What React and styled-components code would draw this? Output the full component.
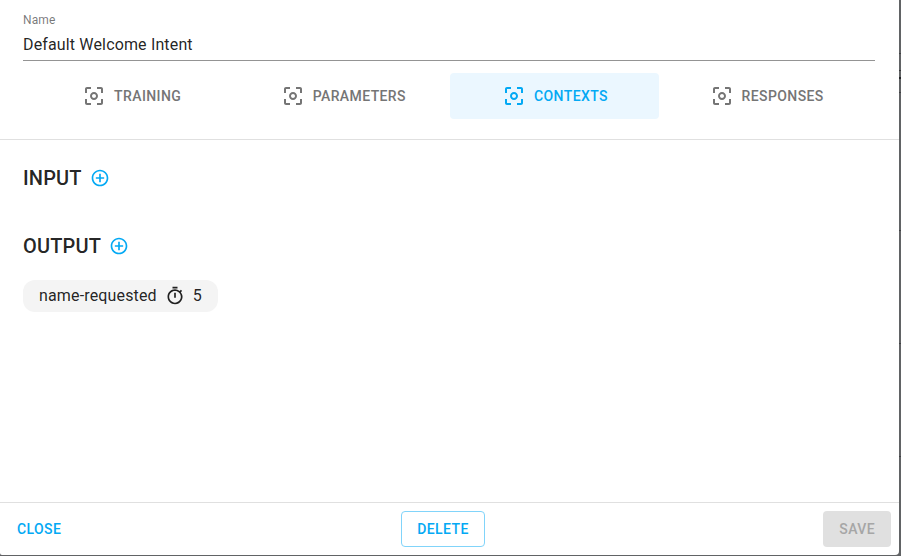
import React from 'react';
import styled, { createGlobalStyle } from 'styled-components';
import { MdCenterFocusWeak, MdAddCircleOutline, MdOutlineTimer } from 'react-icons/md';

const GlobalStyle = createGlobalStyle`
  *, *::before, *::after { box-sizing: border-box; }
  body {
    margin: 0;
    background: #616365;
    color: rgba(0, 0, 0, 0.87);
    font-family: Roboto, 'Liberation Sans', sans-serif;
    font-size: 16px;
  }
`;

const Backdrop = styled.div`
  height: 556px;
  padding: 0 2px 1px 0;
  background:
    linear-gradient(#414345, #414345) 100% 53px / 2px 1px no-repeat,
    linear-gradient(#36383a, #36383a) 100% 70px / 2px 1px no-repeat,
    linear-gradient(#232527, #232527) 100% 77px / 2px 2px no-repeat,
    linear-gradient(#414345, #414345) 100% 92px / 2px 1px no-repeat,
    linear-gradient(#414345, #414345) 100% 230px / 2px 1px no-repeat,
    linear-gradient(#414345, #414345) 100% 343px / 2px 1px no-repeat,
    linear-gradient(#414345, #414345) 100% 456px / 2px 1px no-repeat,
    #616365;
`;

const Dialog = styled.main`
  display: flex;
  flex-direction: column;
  height: 555px;
  background: #fff;
  border-radius: 0 0 4px 2px;
`;

const Header = styled.header`
  height: 140px;
  padding: 12px 24px 0 23px;
  border-bottom: 1px solid #e0e0e0;
`;

const Field = styled.label`
  display: block;
  height: 49px;
  border-bottom: 1px solid #949494;
`;

const FieldLabel = styled.span`
  display: block;
  height: 16px;
  color: rgba(0, 0, 0, 0.54);
  font-size: 12px;
  line-height: 16px;
  letter-spacing: 0.11px;
`;

const FieldInput = styled.input`
  display: block;
  width: 100%;
  height: 19px;
  margin-top: 7px;
  padding: 0;
  border: 0;
  outline: 0;
  background: transparent;
  color: inherit;
  font: inherit;
  letter-spacing: 0.15px;
`;

const Tabs = styled.nav`
  display: grid;
  grid-template-columns: repeat(4, 209px);
  column-gap: 2.65px;
  margin: 12px 0 0 3.7px;
`;

const Tab = styled.button`
  display: flex;
  align-items: center;
  justify-content: center;
  gap: 8px;
  height: 46px;
  padding: 0 0 0 1px;
  border: 0;
  border-radius: 4px;
  background: ${({ $active }) => ($active ? '#ebf7ff' : 'transparent')};
  color: ${({ $active }) => ($active ? '#03a9f4' : '#757575')};
  font: 500 14px/24px Roboto, 'Liberation Sans', sans-serif;
  letter-spacing: 0.4px;
  text-transform: uppercase;
`;

const Content = styled.div`
  flex: 1;
  padding: 22px 23px;
`;

const Section = styled.section`
  height: 68px;
`;

const Heading = styled.h2`
  display: flex;
  align-items: center;
  gap: 8px;
  height: 32px;
  margin: 0;
  font-size: 20px;
  font-weight: 500;
  line-height: 32px;
  letter-spacing: 0.15px;
`;

const AddButton = styled.button`
  display: flex;
  padding: 0;
  border: 0;
  background: none;
  color: #03a9f4;
`;

const Chip = styled.div`
  display: inline-flex;
  align-items: center;
  height: 32px;
  margin-top: 18px;
  padding: 0 16px;
  border-radius: 12px;
  background: #f4f4f4;
  line-height: 24px;
  letter-spacing: 0.15px;

  svg { margin: 0 8px; }
`;

const Footer = styled.footer`
  display: grid;
  grid-template-columns: 392px 1fr auto;
  align-items: center;
  justify-items: start;
  height: 53px;
  padding: 0 8px 0 9px;
  border-top: 1px solid #e0e0e0;
`;

const variants = {
  text: 'padding: 0 8px; border: 0; color: #03a9f4; background: transparent;',
  outlined: 'width: 84px; padding: 0; border: 1px solid #81d4fa; color: #03a9f4; background: transparent;',
  disabled: 'padding: 0 16px; border: 0; color: #a6a6a6; background: #e0e0e0;',
};

const Action = styled.button`
  height: 36px;
  border-radius: 4px;
  font: 500 14px/24px Roboto, 'Liberation Sans', sans-serif;
  letter-spacing: 0.4px;
  text-transform: uppercase;
  ${({ $variant }) => variants[$variant]}
`;

const tabs = ['Training', 'Parameters', 'Contexts', 'Responses'];

export default function App() {
  return (
    <>
      <GlobalStyle />
      <Backdrop>
        <Dialog>
          <Header>
            <Field>
              <FieldLabel>Name</FieldLabel>
              <FieldInput defaultValue="Default Welcome Intent" />
            </Field>
            <Tabs>
              {tabs.map((name) => (
                <Tab key={name} $active={name === 'Contexts'}>
                  <MdCenterFocusWeak size={24} />
                  {name}
                </Tab>
              ))}
            </Tabs>
          </Header>
          <Content>
            <Section>
              <Heading>
                INPUT
                <AddButton aria-label="Add input context"><MdAddCircleOutline size={20} /></AddButton>
              </Heading>
            </Section>
            <Section>
              <Heading>
                OUTPUT
                <AddButton aria-label="Add output context"><MdAddCircleOutline size={20} /></AddButton>
              </Heading>
              <Chip>
                name-requested
                <MdOutlineTimer size={20} />
                5
              </Chip>
            </Section>
          </Content>
          <Footer>
            <Action $variant="text">Close</Action>
            <Action $variant="outlined">Delete</Action>
            <Action $variant="disabled" disabled>Save</Action>
          </Footer>
        </Dialog>
      </Backdrop>
    </>
  );
}
